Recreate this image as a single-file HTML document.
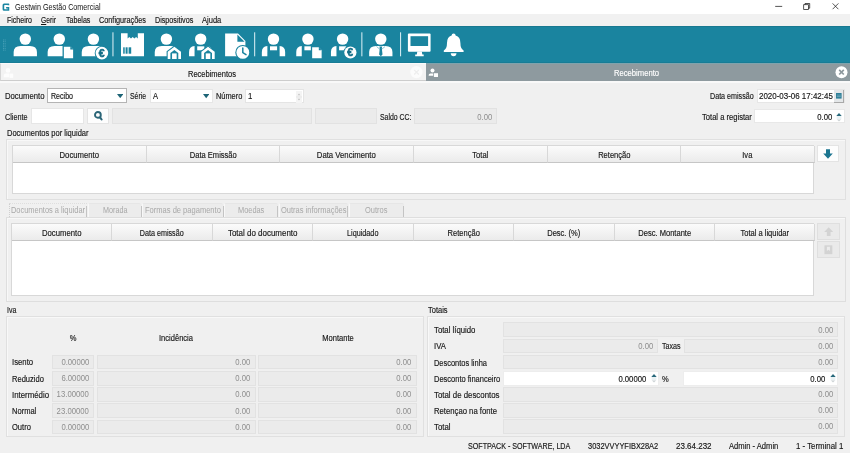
<!DOCTYPE html>
<html lang="pt">
<head>
<meta charset="utf-8">
<title>Gestwin Gestão Comercial</title>
<style>
*{box-sizing:border-box;margin:0;padding:0}
html,body{width:850px;height:453px;overflow:hidden;background:#f0f0f0}
body{position:relative;font-family:"Liberation Sans",sans-serif;font-size:8px;color:#161616;-webkit-text-stroke:0.15px #161616;line-height:10px}
.a{position:absolute;white-space:nowrap}
.t{position:absolute;white-space:nowrap;height:10px;line-height:10px}
#wrap{position:absolute;left:0;top:0;width:850px;height:453px;will-change:transform;transform:translateZ(0)}
.n{letter-spacing:0}
#title{left:0;top:0;width:850px;height:14px;background:#fff}
#menu{left:0;top:14px;width:850px;height:12px;background:#f1f1f1}
#tool{left:0;top:25.6px;width:850px;height:37.2px;background:#1a849f;border-top:1px solid #187890;border-bottom:1px solid #187c95}
#tabL{left:0;top:63.3px;width:426px;height:17.6px;background:#f3f3f3;border-bottom:1px solid #cdcdcd;border-left:1px solid #d6d6d6;border-top:1px solid #fafafa}
#tabR{left:426px;top:63px;width:424px;height:18px;background:#8e9a9f;border-top:1px solid #7fa3ad}
.inp{position:absolute;background:#fff;border:1px solid #c9c9c9}
.dis{position:absolute;background:#ebebeb;border:1px solid #e2e2e2}
.grp{position:absolute;border:1px solid #e0e0e0;background:#f0f0f0;box-shadow:inset 1px 1px 0 #f8f8f8}
.tbl{position:absolute;background:#fff;border:1px solid #d8d8d8}
.th{position:absolute;top:0;height:17px;background:linear-gradient(#fbfbfb,#ebebeb);border-right:1px solid #d8d8d8;border-bottom:1px solid #c6c6c6;text-align:center;line-height:16px}
.btn{position:absolute;background:#fdfdfd;border:1px solid #e4e4e4}
.g{color:#8e8e8e;-webkit-text-stroke:0}
.r{text-align:right}
</style>
</head>
<body>
<div id="wrap">
<div class="a" id="title"></div><div class="a" id="menu"></div><div class="a" id="tool"></div><div class="a" id="tabL"></div><div class="a" id="tabR"></div>
<svg class="a" style="left:2.4px;top:3.2px" width="8.6" height="8.6" viewBox="0 0 9 9"><path d="M7.6 2.4 L7.6 1.2 Q7.6 0.6 7 0.6 L2.2 0.6 Q0.6 0.6 0.6 2.2 L0.6 6.6 Q0.6 8.2 2.2 8.2 L7.6 8.2 L7.6 4.3 L4.3 4.3 L4.3 5.7 L5.9 5.7 L5.9 6.6 L2.8 6.6 Q2.3 6.6 2.3 6.1 L2.3 2.7 Q2.3 2.2 2.8 2.2 L5.9 2.2 L5.9 2.4 Z" fill="#1b86a2"/></svg>
<div class="t " style="left:15px;top:2.9px;font-size:8.2px;transform-origin:0 50%;transform:scaleX(0.878);-webkit-text-stroke:0;color:#111">Gestwin Gestão Comercial</div>
<svg class="a" style="left:770px;top:0" width="75" height="14" viewBox="0 0 75 14"><g stroke="#1c1c1c" stroke-width="0.75" fill="none"><path d="M5.2 6.4H12.2"/><rect x="33.7" y="4.7" width="4.7" height="4.7"/><path d="M35 4.7V3.5H39.7V8.2H38.4"/><path d="M62.6 3.4L68.4 9.2M68.4 3.4L62.6 9.2"/></g></svg>
<div class="t " style="left:6.5px;top:15px;font-size:8.4px;transform-origin:0 50%;transform:scaleX(0.839);">Ficheiro</div>
<div class="t " style="left:41px;top:15px;font-size:8.4px;transform-origin:0 50%;transform:scaleX(0.805);"><u>G</u>erir</div>
<div class="t " style="left:65.5px;top:15px;font-size:8.4px;transform-origin:0 50%;transform:scaleX(0.845);">Tabelas</div>
<div class="t " style="left:99px;top:15px;font-size:8.4px;transform-origin:0 50%;transform:scaleX(0.87);">Configurações</div>
<div class="t " style="left:155px;top:15px;font-size:8.4px;transform-origin:0 50%;transform:scaleX(0.857);">Dispositivos</div>
<div class="t " style="left:202px;top:15px;font-size:8.4px;transform-origin:0 50%;transform:scaleX(0.901);">Ajuda</div>
<svg class="a" style="left:0;top:25.5px" width="850" height="37" viewBox="0 25.5 850 37"><rect x="3" y="39.0" width="0.9" height="0.9" fill="#4fa5bb"/><rect x="3" y="40.7" width="0.9" height="0.9" fill="#4fa5bb"/><rect x="3" y="42.4" width="0.9" height="0.9" fill="#4fa5bb"/><rect x="3" y="44.1" width="0.9" height="0.9" fill="#4fa5bb"/><rect x="3" y="45.8" width="0.9" height="0.9" fill="#4fa5bb"/><rect x="3" y="47.5" width="0.9" height="0.9" fill="#4fa5bb"/><rect x="3" y="49.2" width="0.9" height="0.9" fill="#4fa5bb"/><rect x="4.7" y="39.0" width="0.9" height="0.9" fill="#4fa5bb"/><rect x="4.7" y="40.7" width="0.9" height="0.9" fill="#4fa5bb"/><rect x="4.7" y="42.4" width="0.9" height="0.9" fill="#4fa5bb"/><rect x="4.7" y="44.1" width="0.9" height="0.9" fill="#4fa5bb"/><rect x="4.7" y="45.8" width="0.9" height="0.9" fill="#4fa5bb"/><rect x="4.7" y="47.5" width="0.9" height="0.9" fill="#4fa5bb"/><rect x="4.7" y="49.2" width="0.9" height="0.9" fill="#4fa5bb"/>
<g fill="#fff">
<circle cx="25.3" cy="38.6" r="5.7"/><path d="M13.65 55.8V51.6Q13.65 45.5 20.65 45.5H29.950000000000003Q36.95 45.5 36.95 51.6V55.8Z"/>
<circle cx="59.3" cy="38.6" r="5.7"/><path d="M47.65 55.8V51.6Q47.65 45.5 54.65 45.5H63.95Q70.95 45.5 70.95 51.6V55.8Z"/><path d="M63.2 45.6H70.6L73.8 48.800000000000004V58.400000000000006H63.2Z" fill="#fff" stroke="#1a849f" stroke-width="1.3"/><path d="M70.3 46.2V49.1H73.2Z" fill="#1a849f"/>
<circle cx="93.4" cy="38.6" r="5.7"/><path d="M81.75 55.8V51.6Q81.75 45.5 88.75 45.5H98.05000000000001Q105.05000000000001 45.5 105.05000000000001 51.6V55.8Z"/><circle cx="101.9" cy="52.6" r="7.2" fill="#1a849f"/><circle cx="101.9" cy="52.6" r="6.3" fill="#fff"/><text x="101.7" y="56.2" font-size="10.5" font-weight="bold" text-anchor="middle" fill="#156f88" stroke="#156f88" stroke-width="0.5" font-family="Liberation Sans,sans-serif">€</text>
<rect x="112.4" y="31.8" width="1.1" height="24" fill="#cfe8ef"/>
<path d="M121 32.8H127.6V38L129.3 36.6L131 38L132.7 36.6L134.4 38L136.1 36.6L137.8 38V32.8H144V55.8H121Z"/><g fill="#1a849f"><rect x="123.2" y="46.8" width="1.5" height="6.4"/><rect x="125.6" y="46.8" width="2" height="6.4"/><rect x="128.6" y="46.8" width="2.6" height="6.4"/></g>
<circle cx="166.4" cy="38.6" r="5.7"/><path d="M154.75 55.8V51.6Q154.75 45.5 161.75 45.5H171.05Q178.05 45.5 178.05 51.6V55.8Z"/><path d="M174.35 45.0L182.1 50.699999999999996V59.5H166.6V50.699999999999996Z" fill="#1a849f"/><path d="M174.35 46.3L181.0 51.199999999999996V58.5H178.3V52.5L174.35 49.599999999999994L170.39999999999998 52.5V58.5H167.7V51.199999999999996Z" fill="#fff"/><rect x="172.05" y="52.9" width="4.6" height="5.6" fill="#fff"/>
<circle cx="200.7" cy="38.6" r="5.7"/><path d="M189.05 55.8V51.6Q189.05 46.2 194.55 45.6V55.8Z"/><path d="M212.35 55.8V51.6Q212.35 46.2 206.85 45.6V55.8Z"/><rect x="197.2" y="45.8" width="7.1" height="4"/><path d="M208.05 45.0L215.8 50.699999999999996V59.5H200.3V50.699999999999996Z" fill="#1a849f"/><path d="M208.05 46.3L214.70000000000002 51.199999999999996V58.5H212.00000000000003V52.5L208.05 49.599999999999994L204.1 52.5V58.5H201.4V51.199999999999996Z" fill="#fff"/><rect x="205.75" y="52.9" width="4.6" height="5.6" fill="#fff"/>
<path d="M225.1 33.1H238L245.4 40.5V55.8H225.1Z"/><path d="M237.4 34V41.2H244.6Z" fill="#1a849f"/><circle cx="242.8" cy="51.9" r="7.5" fill="#1a849f"/><circle cx="242.8" cy="51.9" r="6.4" fill="#fff"/><path d="M242.8 47.6V52.1L246 54.2" stroke="#1a849f" stroke-width="1.5" fill="none" stroke-linecap="round"/>
<rect x="254.1" y="31.8" width="1.1" height="24" fill="#cfe8ef"/>
<circle cx="273.5" cy="38.6" r="5.7"/><path d="M261.85 55.8V51.6Q261.85 46.2 267.35 45.6V55.8Z"/><path d="M285.15 55.8V51.6Q285.15 46.2 279.65 45.6V55.8Z"/><rect x="270.0" y="45.8" width="7.1" height="4"/>
<circle cx="307.9" cy="38.6" r="5.7"/><path d="M296.25 55.8V51.6Q296.25 46.2 301.75 45.6V55.8Z"/><path d="M319.55 55.8V51.6Q319.55 46.2 314.05 45.6V55.8Z"/><rect x="304.4" y="45.8" width="7.1" height="4"/><path d="M311.5 46.2H319.1L322.3 49.400000000000006V58.400000000000006H311.5Z" fill="#fff" stroke="#1a849f" stroke-width="1.3"/><path d="M318.8 46.800000000000004V49.7H321.7Z" fill="#1a849f"/>
<circle cx="342.6" cy="38.6" r="5.7"/><path d="M330.95 55.8V51.6Q330.95 46.2 336.45 45.6V55.8Z"/><path d="M354.25 55.8V51.6Q354.25 46.2 348.75 45.6V55.8Z"/><rect x="339.1" y="45.8" width="7.1" height="4"/><circle cx="350.4" cy="52" r="7.0" fill="#1a849f"/><circle cx="350.4" cy="52" r="6.1" fill="#fff"/><text x="350.2" y="55.6" font-size="10.5" font-weight="bold" text-anchor="middle" fill="#156f88" stroke="#156f88" stroke-width="0.5" font-family="Liberation Sans,sans-serif">€</text>
<rect x="361.3" y="31.8" width="1.1" height="24" fill="#cfe8ef"/>
<circle cx="380.8" cy="38.6" r="5.7"/><path d="M369.15000000000003 55.8V51.6Q369.15000000000003 45.5 376.15000000000003 45.5H385.45Q392.45 45.5 392.45 51.6V55.8Z"/><path d="M379.3 46H382.3L381.8 47.5L382.5 54L380.8 55.8L379.1 54L379.8 47.5Z" fill="#1a849f"/><path d="M376.5 46L380.8 49.5L385.1 46" fill="none" stroke="#1a849f" stroke-width="0.5"/>
<rect x="400.0" y="31.8" width="1.1" height="24" fill="#cfe8ef"/>
<rect x="407.9" y="33.1" width="22.7" height="18.1" rx="1"/><rect x="410.5" y="35.7" width="17.6" height="9.8" fill="#1a849f"/><path d="M417.3 51H421.8L422.3 54H423.7V55.8H415.2V54H416.8Z"/>
<path d="M453.6 33.1Q455.6 33.1 455.6 35.1Q460.4 36.6 460.4 42.5Q460.4 48.2 463.6 50V51.6H443.8V50Q447 48.2 447 42.5Q447 36.6 451.6 35.1Q451.6 33.1 453.6 33.1Z"/><path d="M450.7 52.8H456.5Q456.3 55.7 453.6 55.7Q450.9 55.7 450.7 52.8Z"/>
</g></svg>
<div class="a" style="left:0px;top:81px;width:850px;height:1.6px;background:#f9f9f9"></div>
<svg class="a" style="left:2.5px;top:66.8px" width="12" height="12" viewBox="0 0 12 12"><g fill="#fff" opacity="0.9"><circle cx="5" cy="3.4" r="2.3"/><path d="M0.8 10.2V8.6Q0.8 6.4 3 6.4H6.2V10.2Z"/><rect x="6.6" y="6.6" width="3.6" height="4.2"/></g></svg>
<div class="t " style="left:187.8px;top:68.8px;font-size:8.4px;transform-origin:0 50%;transform:scaleX(0.895);">Recebimentos</div>
<svg class="a" style="left:409px;top:65px" width="15" height="15" viewBox="0 0 15 15"><circle cx="7.4" cy="7.1" r="6.2" fill="#fff" opacity="0.7"/><path d="M5.2 4.9L9.8 9.5M9.8 4.9L5.2 9.5" stroke="#eeeeee" stroke-width="1.3"/></svg>
<svg class="a" style="left:428px;top:67px" width="12" height="11" viewBox="0 0 12 11"><g fill="#fff"><circle cx="4.5" cy="3.4" r="2"/><path d="M0.7 8.8V7.9Q0.7 6.4 2.4 6.4H5.2V8.8Z"/><rect x="5.9" y="6.2" width="4.1" height="3.8"/></g></svg>
<div class="t " style="left:613.8px;top:68.3px;font-size:8.4px;transform-origin:0 50%;transform:scaleX(0.912);color:#fff;-webkit-text-stroke:0.15px #fff">Recebimento</div>
<svg class="a" style="left:834px;top:65px" width="15" height="15" viewBox="0 0 15 15"><circle cx="7.5" cy="7.2" r="6" fill="#fff"/><path d="M5.2 4.9L9.8 9.5M9.8 4.9L5.2 9.5" stroke="#8d989d" stroke-width="1.7"/></svg>
<div class="t " style="left:4.7px;top:91.2px;font-size:8.4px;transform-origin:0 50%;transform:scaleX(0.922);">Documento</div>
<div class="inp" style="left:47.1px;top:88.3px;width:79.5px;height:15.1px;border-color:#b4b4b4"><div class="t " style="left:2.6px;top:2px;font-size:8.4px;transform-origin:0 50%;transform:scaleX(0.844);">Recibo</div><svg class="a" style="right:2.5px;top:4.7px" width="6.4" height="4.2" viewBox="0 0 6.4 4.2"><path d="M0 0H6.4L3.2 4.2Z" fill="#1d6476"/></svg></div>
<div class="t " style="left:130px;top:91.2px;font-size:8.4px;transform-origin:0 50%;transform:scaleX(0.818);">Série</div>
<div class="inp" style="left:149.8px;top:88.7px;width:63.2px;height:14.5px;border-color:#e6e6e6"><div class="t " style="left:2.2px;top:1.6px;font-size:8.4px;transform-origin:0 50%;transform:scaleX(0.9);">A</div><svg class="a" style="right:2.5px;top:4.7px" width="6.4" height="4.2" viewBox="0 0 6.4 4.2"><path d="M0 0H6.4L3.2 4.2Z" fill="#1d6476"/></svg></div>
<div class="t " style="left:216.3px;top:91.2px;font-size:8.4px;transform-origin:0 50%;transform:scaleX(0.883);">Número</div>
<div class="inp" style="left:245.4px;top:88.7px;width:58.2px;height:14.5px;border-color:#e4e4e4"><div class="t " style="left:2px;top:1.6px;font-size:8.4px;transform-origin:0 50%;transform:scaleX(0.93);">1</div><svg class="a" style="right:1px;top:1px" width="6" height="12" viewBox="0 0 6 12"><rect x="0" y="0" width="6" height="12" fill="#f4f4f4"/><path d="M1.6 4.2L3 2.4L4.4 4.2ZM1.6 7.8L3 9.6L4.4 7.8Z" fill="#c4c4c4"/><path d="M0 6H6" stroke="#dcdcdc" stroke-width="0.6"/></svg></div>
<div class="t " style="left:710.3px;top:91.2px;font-size:8.4px;transform-origin:0 50%;transform:scaleX(0.853);">Data emissão</div>
<div class="inp" style="left:756.8px;top:88.7px;width:88.2px;height:14.3px;border-color:#e6e6e6"><div class="t " style="left:0.9px;top:1.6px;font-size:8.4px;transform-origin:0 50%;transform:scaleX(0.949);">2020-03-06 17:42:45</div><div class="a" style="right:0;top:0;width:9.5px;height:13px;background:#e4e7e9;border-right:1px solid #a9a9a9;border-bottom:1px solid #a9a9a9"><svg class="a" style="left:2px;top:3.2px" width="6" height="6" viewBox="0 0 6 6"><rect x="0" y="0" width="5.6" height="5.6" fill="#2f7f98"/><path d="M0.8 2.1H4.8M0.8 3.6H4.8" stroke="#9cc7d4" stroke-width="0.5"/></svg></div></div>
<div class="t " style="left:5.3px;top:112.2px;font-size:8.4px;transform-origin:0 50%;transform:scaleX(0.867);">Cliente</div>
<div class="inp" style="left:30.8px;top:108.4px;width:52.9px;height:16.0px;border-color:#e6e6e6"></div>
<div class="btn" style="left:86.5px;top:108.4px;width:22.0px;height:16.0px;"><svg class="a" style="left:6.3px;top:2px" width="10" height="11" viewBox="0 0 10 11"><circle cx="3.9" cy="3.9" r="2.9" fill="none" stroke="#2b6577" stroke-width="1.9"/><path d="M6.2 6.6L7.6 8.5" stroke="#2b6577" stroke-width="2.1" stroke-linecap="round"/></svg></div>
<div class="dis" style="left:112px;top:108.4px;width:200.4px;height:16.0px;"></div>
<div class="dis" style="left:315.2px;top:108.4px;width:61.8px;height:16.0px;"></div>
<div class="t " style="left:379.8px;top:112.2px;font-size:8.4px;transform-origin:0 50%;transform:scaleX(0.825);">Saldo CC:</div>
<div class="dis" style="left:414.1px;top:108.4px;width:83.4px;height:16.0px;"><div class="t g" style="right:4.2px;top:2.4px;font-size:8.4px;transform-origin:100% 50%;transform:scaleX(0.92);">0.00</div></div>
<div class="t " style="left:701.7px;top:112.2px;font-size:8.4px;transform-origin:0 50%;transform:scaleX(0.908);">Total a registar</div>
<div class="inp" style="left:754px;top:109.3px;width:90.5px;height:14.1px;border-color:#e8e8e8"><div class="t " style="right:11.3px;top:2px;font-size:8.4px;transform-origin:100% 50%;transform:scaleX(0.92);">0.00</div><svg class="a" style="right:1.2px;top:1.3px" width="6" height="11" viewBox="0 0 6 11"><rect x="0.6" y="4" width="4.8" height="3.4" fill="#eaf2f4"/><path d="M0.3 4L3 1.1L5.7 4Z" fill="#27687b"/><path d="M0.9 7.4L3 9.6L5.1 7.4Z" fill="#cdd2d4"/></svg></div>
<div class="t " style="left:6.6px;top:127.6px;font-size:8.4px;transform-origin:0 50%;transform:scaleX(0.898);">Documentos por liquidar</div>
<div class="grp" style="left:5.5px;top:139px;width:840.0px;height:60.5px;"></div>
<div class="tbl" style="left:12.2px;top:144.8px;width:801.6px;height:49.0px;"><div class="th" style="left:0.0px;width:133.6px;height:17.2px;line-height:18.4px"><div style="font-size:8.4px;transform:scaleX(0.922)">Documento</div></div><div class="th" style="left:133.6px;width:133.6px;height:17.2px;line-height:18.4px"><div style="font-size:8.4px;transform:scaleX(0.9)">Data Emissão</div></div><div class="th" style="left:267.2px;width:133.6px;height:17.2px;line-height:18.4px"><div style="font-size:8.4px;transform:scaleX(0.925)">Data Vencimento</div></div><div class="th" style="left:400.8px;width:133.6px;height:17.2px;line-height:18.4px"><div style="font-size:8.4px;transform:scaleX(0.9)">Total</div></div><div class="th" style="left:534.4px;width:133.6px;height:17.2px;line-height:18.4px"><div style="font-size:8.4px;transform:scaleX(0.9)">Retenção</div></div><div class="th" style="left:668.0px;width:133.6px;height:17.2px;line-height:18.4px"><div style="font-size:8.4px;transform:scaleX(0.9)">Iva</div></div></div>
<div class="btn" style="left:816.5px;top:145px;width:22.3px;height:17px;"><svg class="a" style="left:5.5px;top:3px" width="10" height="10" viewBox="0 0 10 10"><path d="M3 0.3H7V4.6H9.8L5 9.8L0.2 4.6H3Z" fill="#1c7590"/></svg></div>
<div class="a" style="left:8.5px;top:202.8px;width:78.7px;height:14.4px;background:#f0f0f0;border-left:1px dotted #cfcfcf;border-top:1px dotted #dedede"></div>
<div class="a" style="left:86.4px;top:205.6px;width:1.1px;height:11.0px;background:#c4c4c4"></div>
<div class="t " style="left:10.7px;top:205.4px;font-size:8.4px;transform-origin:0 50%;transform:scaleX(0.888);color:#a8a8a8;-webkit-text-stroke:0">Documentos a liquidar</div>
<div class="a" style="left:88.3px;top:203.4px;width:53.0px;height:13.6px;background:#ececec;border-left:1px solid #f8f8f8;border-top:1px solid #e6e6e6;border-radius:2px 2px 0 0"></div>
<div class="a" style="left:140.5px;top:205.6px;width:1.1px;height:11.0px;background:#c4c4c4"></div>
<div class="t " style="left:102.6px;top:205.4px;font-size:8.4px;transform-origin:0 50%;transform:scaleX(0.859);color:#a8a8a8;-webkit-text-stroke:0">Morada</div>
<div class="a" style="left:142.2px;top:203.4px;width:81.1px;height:13.6px;background:#ececec;border-left:1px solid #f8f8f8;border-top:1px solid #e6e6e6;border-radius:2px 2px 0 0"></div>
<div class="a" style="left:222.5px;top:205.6px;width:1.1px;height:11.0px;background:#c4c4c4"></div>
<div class="t " style="left:145px;top:205.4px;font-size:8.4px;transform-origin:0 50%;transform:scaleX(0.9);color:#a8a8a8;-webkit-text-stroke:0">Formas de pagamento</div>
<div class="a" style="left:224.2px;top:203.4px;width:53.7px;height:13.6px;background:#ececec;border-left:1px solid #f8f8f8;border-top:1px solid #e6e6e6;border-radius:2px 2px 0 0"></div>
<div class="a" style="left:277.09999999999997px;top:205.6px;width:1.1px;height:11.0px;background:#c4c4c4"></div>
<div class="t " style="left:237.7px;top:205.4px;font-size:8.4px;transform-origin:0 50%;transform:scaleX(0.883);color:#a8a8a8;-webkit-text-stroke:0">Moedas</div>
<div class="a" style="left:278.6px;top:203.4px;width:69.6px;height:13.6px;background:#ececec;border-left:1px solid #f8f8f8;border-top:1px solid #e6e6e6;border-radius:2px 2px 0 0"></div>
<div class="a" style="left:347.4px;top:205.6px;width:1.1px;height:11.0px;background:#c4c4c4"></div>
<div class="t " style="left:281.3px;top:205.4px;font-size:8.4px;transform-origin:0 50%;transform:scaleX(0.896);color:#a8a8a8;-webkit-text-stroke:0">Outras informações</div>
<div class="a" style="left:348.9px;top:203.4px;width:54.9px;height:13.6px;background:#ececec;border-left:1px solid #f8f8f8;border-top:1px solid #e6e6e6;border-radius:2px 2px 0 0"></div>
<div class="a" style="left:403.0px;top:205.6px;width:1.1px;height:11.0px;background:#c4c4c4"></div>
<div class="t " style="left:364.7px;top:205.4px;font-size:8.4px;transform-origin:0 50%;transform:scaleX(0.891);color:#a8a8a8;-webkit-text-stroke:0">Outros</div>
<div class="grp" style="left:5.5px;top:217px;width:840.0px;height:84.8px;border-color:#dedede"></div>
<div class="tbl" style="left:10.7px;top:222.8px;width:803.8px;height:73.2px;"><div class="th" style="left:0.0px;width:100.47px;height:17.2px;line-height:18.4px"><div style="font-size:8.4px;transform:scaleX(0.922)">Documento</div></div><div class="th" style="left:100.47px;width:100.47px;height:17.2px;line-height:18.4px"><div style="font-size:8.4px;transform:scaleX(0.855)">Data emissão</div></div><div class="th" style="left:200.95px;width:100.47px;height:17.2px;line-height:18.4px"><div style="font-size:8.4px;transform:scaleX(0.951)">Total do documento</div></div><div class="th" style="left:301.42px;width:100.47px;height:17.2px;line-height:18.4px"><div style="font-size:8.4px;transform:scaleX(0.864)">Liquidado</div></div><div class="th" style="left:401.9px;width:100.47px;height:17.2px;line-height:18.4px"><div style="font-size:8.4px;transform:scaleX(0.9)">Retenção</div></div><div class="th" style="left:502.38px;width:100.47px;height:17.2px;line-height:18.4px"><div style="font-size:8.4px;transform:scaleX(0.9)">Desc. (%)</div></div><div class="th" style="left:602.85px;width:100.47px;height:17.2px;line-height:18.4px"><div style="font-size:8.4px;transform:scaleX(0.9)">Desc. Montante</div></div><div class="th" style="left:703.32px;width:100.47px;height:17.2px;line-height:18.4px"><div style="font-size:8.4px;transform:scaleX(0.9)">Total a liquidar</div></div></div>
<div class="a" style="left:817px;top:222.8px;width:22.8px;height:16.8px;background:#eaeaea;border:1px solid #dfdfdf"><svg class="a" style="left:6.3px;top:2.8px" width="9.4" height="9.6" viewBox="0 0 9 9"><path d="M4.5 0.2L8.8 4.6H6.3V8.6H2.7V4.6H0.2Z" fill="#d3d3d3"/></svg></div>
<div class="a" style="left:817px;top:241.2px;width:22.8px;height:17.2px;background:#eaeaea;border:1px solid #dfdfdf"><svg class="a" style="left:6.4px;top:3.2px" width="8.8" height="9.6" viewBox="0 0 8 9"><path d="M0.3 0.3H7.7V8.6H0.3Z" fill="#d3d3d3"/><path d="M2.6 1.6H5.4V5.6L4 4.5L2.6 5.6Z" fill="#ececec"/></svg></div>
<div class="t " style="left:6.6px;top:304.9px;font-size:8.4px;transform-origin:0 50%;transform:scaleX(0.84);">Iva</div>
<div class="grp" style="left:5.5px;top:316.4px;width:418.1px;height:120.2px;"></div>
<div class="t " style="left:-27.1px;width:200px;text-align:center;top:333.2px;font-size:8.4px;transform:scaleX(0.9);">%</div>
<div class="t " style="left:75.6px;width:200px;text-align:center;top:333.2px;font-size:8.4px;transform:scaleX(0.9);">Incidência</div>
<div class="t " style="left:237.7px;width:200px;text-align:center;top:333.2px;font-size:8.4px;transform:scaleX(0.9);">Montante</div>
<div class="t " style="left:11.8px;top:357.4px;font-size:8.4px;transform-origin:0 50%;transform:scaleX(0.924);">Isento</div>
<div class="dis" style="left:51.5px;top:354.8px;width:42.8px;height:14.7px;"><div class="t g" style="right:4.2px;top:1.2px;font-size:8.4px;transform-origin:100% 50%;transform:scaleX(0.921);">0.00000</div></div>
<div class="dis" style="left:97.2px;top:354.8px;width:158.6px;height:14.7px;"><div class="t g" style="right:4.4px;top:1.2px;font-size:8.4px;transform-origin:100% 50%;transform:scaleX(0.92);">0.00</div></div>
<div class="dis" style="left:258.4px;top:354.8px;width:158.4px;height:14.7px;"><div class="t g" style="right:4.2px;top:1.2px;font-size:8.4px;transform-origin:100% 50%;transform:scaleX(0.92);">0.00</div></div>
<div class="t " style="left:11.8px;top:373.6px;font-size:8.4px;transform-origin:0 50%;transform:scaleX(0.9);">Reduzido</div>
<div class="dis" style="left:51.5px;top:371.0px;width:42.8px;height:14.7px;"><div class="t g" style="right:4.2px;top:1.2px;font-size:8.4px;transform-origin:100% 50%;transform:scaleX(0.921);">6.00000</div></div>
<div class="dis" style="left:97.2px;top:371.0px;width:158.6px;height:14.7px;"><div class="t g" style="right:4.4px;top:1.2px;font-size:8.4px;transform-origin:100% 50%;transform:scaleX(0.92);">0.00</div></div>
<div class="dis" style="left:258.4px;top:371.0px;width:158.4px;height:14.7px;"><div class="t g" style="right:4.2px;top:1.2px;font-size:8.4px;transform-origin:100% 50%;transform:scaleX(0.92);">0.00</div></div>
<div class="t " style="left:11.8px;top:389.8px;font-size:8.4px;transform-origin:0 50%;transform:scaleX(0.937);">Intermédio</div>
<div class="dis" style="left:51.5px;top:387.2px;width:42.8px;height:14.7px;"><div class="t g" style="right:4.2px;top:1.2px;font-size:8.4px;transform-origin:100% 50%;transform:scaleX(0.925);">13.00000</div></div>
<div class="dis" style="left:97.2px;top:387.2px;width:158.6px;height:14.7px;"><div class="t g" style="right:4.4px;top:1.2px;font-size:8.4px;transform-origin:100% 50%;transform:scaleX(0.92);">0.00</div></div>
<div class="dis" style="left:258.4px;top:387.2px;width:158.4px;height:14.7px;"><div class="t g" style="right:4.2px;top:1.2px;font-size:8.4px;transform-origin:100% 50%;transform:scaleX(0.92);">0.00</div></div>
<div class="t " style="left:11.8px;top:406.0px;font-size:8.4px;transform-origin:0 50%;transform:scaleX(0.9);">Normal</div>
<div class="dis" style="left:51.5px;top:403.4px;width:42.8px;height:14.7px;"><div class="t g" style="right:4.2px;top:1.2px;font-size:8.4px;transform-origin:100% 50%;transform:scaleX(0.925);">23.00000</div></div>
<div class="dis" style="left:97.2px;top:403.4px;width:158.6px;height:14.7px;"><div class="t g" style="right:4.4px;top:1.2px;font-size:8.4px;transform-origin:100% 50%;transform:scaleX(0.92);">0.00</div></div>
<div class="dis" style="left:258.4px;top:403.4px;width:158.4px;height:14.7px;"><div class="t g" style="right:4.2px;top:1.2px;font-size:8.4px;transform-origin:100% 50%;transform:scaleX(0.92);">0.00</div></div>
<div class="t " style="left:11.8px;top:422.2px;font-size:8.4px;transform-origin:0 50%;transform:scaleX(0.9);">Outro</div>
<div class="dis" style="left:51.5px;top:419.6px;width:42.8px;height:14.7px;"><div class="t g" style="right:4.2px;top:1.2px;font-size:8.4px;transform-origin:100% 50%;transform:scaleX(0.921);">0.00000</div></div>
<div class="dis" style="left:97.2px;top:419.6px;width:158.6px;height:14.7px;"><div class="t g" style="right:4.4px;top:1.2px;font-size:8.4px;transform-origin:100% 50%;transform:scaleX(0.92);">0.00</div></div>
<div class="dis" style="left:258.4px;top:419.6px;width:158.4px;height:14.7px;"><div class="t g" style="right:4.2px;top:1.2px;font-size:8.4px;transform-origin:100% 50%;transform:scaleX(0.92);">0.00</div></div>
<div class="t " style="left:428.4px;top:304.9px;font-size:8.4px;transform-origin:0 50%;transform:scaleX(0.895);">Totais</div>
<div class="grp" style="left:427.4px;top:316.4px;width:418.1px;height:120.2px;"></div>
<div class="t " style="left:434.2px;top:325.2px;font-size:8.4px;transform-origin:0 50%;transform:scaleX(0.926);">Total líquido</div>
<div class="dis" style="left:503.4px;top:322.4px;width:334.6px;height:14.8px;"><div class="t g" style="right:3.6px;top:1.2px;font-size:8.4px;transform-origin:100% 50%;transform:scaleX(0.92);">0.00</div></div>
<div class="t " style="left:434.2px;top:341.35px;font-size:8.4px;transform-origin:0 50%;transform:scaleX(0.923);">IVA</div>
<div class="dis" style="left:503.4px;top:338.55px;width:154.6px;height:14.8px;"><div class="t g" style="right:3.4px;top:1.2px;font-size:8.4px;transform-origin:100% 50%;transform:scaleX(0.92);">0.00</div></div>
<div class="t " style="left:662.2px;top:341.35px;font-size:8.4px;transform-origin:0 50%;transform:scaleX(0.85);">Taxas</div>
<div class="dis" style="left:683.5px;top:338.55px;width:154.5px;height:14.8px;"><div class="t g" style="right:3.6px;top:1.2px;font-size:8.4px;transform-origin:100% 50%;transform:scaleX(0.92);">0.00</div></div>
<div class="t " style="left:434.2px;top:357.5px;font-size:8.4px;transform-origin:0 50%;transform:scaleX(0.888);">Descontos linha</div>
<div class="dis" style="left:503.4px;top:354.7px;width:334.6px;height:14.8px;"><div class="t g" style="right:3.6px;top:1.2px;font-size:8.4px;transform-origin:100% 50%;transform:scaleX(0.92);">0.00</div></div>
<div class="t " style="left:434.2px;top:373.65px;font-size:8.4px;transform-origin:0 50%;transform:scaleX(0.894);">Desconto financeiro</div>
<div class="inp" style="left:503.4px;top:370.85px;width:155.6px;height:14.8px;border-color:#ededed"><div class="t " style="right:11.6px;top:2.2px;font-size:8.4px;transform-origin:100% 50%;transform:scaleX(0.921);">0.00000</div><svg class="a" style="right:1.2px;top:1.3px" width="6" height="11" viewBox="0 0 6 11"><rect x="0.6" y="4" width="4.8" height="3.4" fill="#eaf2f4"/><path d="M0.3 4L3 1.1L5.7 4Z" fill="#27687b"/><path d="M0.9 7.4L3 9.6L5.1 7.4Z" fill="#cdd2d4"/></svg></div>
<div class="t " style="left:662.2px;top:373.65px;font-size:8.4px;transform-origin:0 50%;transform:scaleX(0.9);">%</div>
<div class="inp" style="left:683px;top:370.85px;width:155.4px;height:14.8px;border-color:#ededed"><div class="t " style="right:12.2px;top:2.2px;font-size:8.4px;transform-origin:100% 50%;transform:scaleX(0.92);">0.00</div><svg class="a" style="right:1.2px;top:1.3px" width="6" height="11" viewBox="0 0 6 11"><rect x="0.6" y="4" width="4.8" height="3.4" fill="#eaf2f4"/><path d="M0.3 4L3 1.1L5.7 4Z" fill="#27687b"/><path d="M0.9 7.4L3 9.6L5.1 7.4Z" fill="#cdd2d4"/></svg></div>
<div class="t " style="left:434.2px;top:389.8px;font-size:8.4px;transform-origin:0 50%;transform:scaleX(0.938);">Total de descontos</div>
<div class="dis" style="left:503.4px;top:387.0px;width:334.6px;height:14.8px;"><div class="t g" style="right:3.6px;top:1.2px;font-size:8.4px;transform-origin:100% 50%;transform:scaleX(0.92);">0.00</div></div>
<div class="t " style="left:434.2px;top:405.95px;font-size:8.4px;transform-origin:0 50%;transform:scaleX(0.92);">Retençao na fonte</div>
<div class="dis" style="left:503.4px;top:403.15px;width:334.6px;height:14.8px;"><div class="t g" style="right:3.6px;top:1.2px;font-size:8.4px;transform-origin:100% 50%;transform:scaleX(0.92);">0.00</div></div>
<div class="t " style="left:434.2px;top:422.1px;font-size:8.4px;transform-origin:0 50%;transform:scaleX(0.932);">Total</div>
<div class="dis" style="left:503.4px;top:419.3px;width:334.6px;height:14.8px;"><div class="t g" style="right:3.6px;top:1.2px;font-size:8.4px;transform-origin:100% 50%;transform:scaleX(0.92);">0.00</div></div>
<div class="t " style="left:468px;top:441.2px;font-size:8.4px;transform-origin:0 50%;transform:scaleX(0.852);">SOFTPACK - SOFTWARE, LDA</div>
<div class="t " style="left:588px;top:441.2px;font-size:8.4px;transform-origin:0 50%;transform:scaleX(0.887);">3032VVYYFIBX28A2</div>
<div class="t " style="left:675.7px;top:441.2px;font-size:8.4px;transform-origin:0 50%;transform:scaleX(0.953);">23.64.232</div>
<div class="t " style="left:728.8px;top:441.2px;font-size:8.4px;transform-origin:0 50%;transform:scaleX(0.905);">Admin - Admin</div>
<div class="t " style="left:795.7px;top:441.2px;font-size:8.4px;transform-origin:0 50%;transform:scaleX(0.935);">1 - Terminal 1</div>
</div>
</body>
</html>
